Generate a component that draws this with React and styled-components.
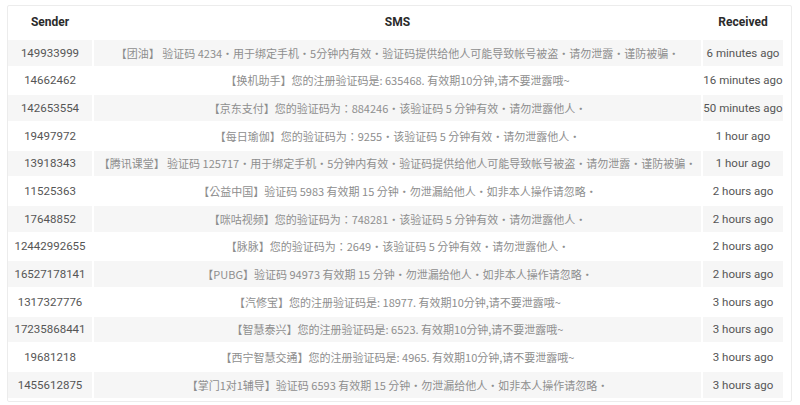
import React from "react";
import styled, { createGlobalStyle } from "styled-components";

const GlobalStyle = createGlobalStyle`
  body {
    margin: 0;
    background: #ffffff;
    font-family: Roboto, "Noto Sans CJK TC", sans-serif;
  }
`;

const Page = styled.div`
  padding: 5px 8px 0 7px;
`;

const Card = styled.div`
  border: 1px solid #ececec;
  border-radius: 2px;
  padding: 0 8px 3px 0;
  display: flex;
  flex-direction: column;
  gap: 2px;
`;

const Row = styled.div`
  display: grid;
  grid-template-columns: 84px 1fr 80px;
  column-gap: 2px;
  height: ${(p) => (p.$head ? "32px" : "25.67px")};
`;

const Cell = styled.div`
  display: flex;
  align-items: center;
  justify-content: center;
  white-space: nowrap;
  overflow: hidden;
  background: ${(p) => (p.$striped ? "#f6f6f6" : "#ffffff")};
  font-size: 11.5px;
  color: #555555;
  font-family: Roboto, "Noto Sans CJK TC", sans-serif;
`;

const SmsCell = styled(Cell)`
  font-size: 11px;
  color: #8e8e8e;
  font-family: "Noto Sans CJK TC", sans-serif;
`;

const HeadCell = styled.div`
  display: flex;
  align-items: center;
  justify-content: center;
  font-size: 12px;
  font-weight: 700;
  color: #2b2b2b;
  font-family: Roboto, sans-serif;
`;

// the screenshot shows the Traditional-style centred commas and stops
const messages = [
  ["149933999", "【团油】 验证码 4234・用于绑定手机・5分钟内有效・验证码提供给他人可能导致帐号被盗・请勿泄露・谨防被骗・", "6 minutes ago"],
  ["14662462", "【换机助手】您的注册验证码是: 635468. 有效期10分钟,请不要泄露哦~", "16 minutes ago"],
  ["142653554", "【京东支付】您的验证码为：884246・该验证码 5 分钟有效・请勿泄露他人・", "50 minutes ago"],
  ["19497972", "【每日瑜伽】您的验证码为：9255・该验证码 5 分钟有效・请勿泄露他人・", "1 hour ago"],
  ["13918343", "【腾讯课堂】 验证码 125717・用于绑定手机・5分钟内有效・验证码提供给他人可能导致帐号被盗・请勿泄露・谨防被骗・", "1 hour ago"],
  ["11525363", "【公益中国】验证码 5983 有效期 15 分钟・勿泄漏給他人・如非本人操作请忽略・", "2 hours ago"],
  ["17648852", "【咪咕视频】您的验证码为：748281・该验证码 5 分钟有效・请勿泄露他人・", "2 hours ago"],
  ["12442992655", "【脉脉】您的验证码为：2649・该验证码 5 分钟有效・请勿泄露他人・", "2 hours ago"],
  ["16527178141", "【PUBG】验证码 94973 有效期 15 分钟・勿泄漏给他人・如非本人操作请忽略・", "2 hours ago"],
  ["1317327776", "【汽修宝】您的注册验证码是: 18977. 有效期10分钟,请不要泄露哦~", "3 hours ago"],
  ["17235868441", "【智慧泰兴】您的注册验证码是: 6523. 有效期10分钟,请不要泄露哦~", "3 hours ago"],
  ["19681218", "【西宁智慧交通】您的注册验证码是: 4965. 有效期10分钟,请不要泄露哦~", "3 hours ago"],
  ["1455612875", "【掌门1对1辅导】验证码 6593 有效期 15 分钟・勿泄漏给他人・如非本人操作请忽略・", "3 hours ago"],
];

export default function App() {
  return (
    <Page lang="zh-Hant-TW">
      <GlobalStyle />
      <Card>
        <Row $head>
          <HeadCell>Sender</HeadCell>
          <HeadCell>SMS</HeadCell>
          <HeadCell>Received</HeadCell>
        </Row>
        {messages.map(([sender, text, time], i) => (
          <Row key={i}>
            <Cell $striped={i % 2 === 0}>{sender}</Cell>
            <SmsCell $striped={i % 2 === 0}>{text}</SmsCell>
            <Cell $striped={i % 2 === 0}>{time}</Cell>
          </Row>
        ))}
      </Card>
    </Page>
  );
}
